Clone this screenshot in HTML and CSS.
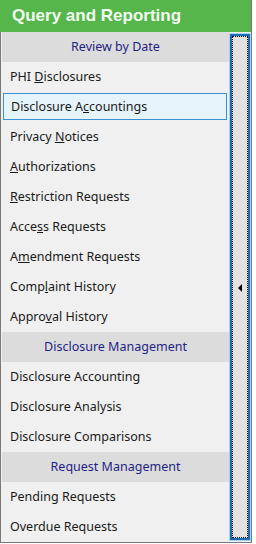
FILE: index.html
```html
<!DOCTYPE html>
<html lang="en">
<head>
    <meta charset="UTF-8">
    <title>Query and Reporting</title>
    <link rel="stylesheet" href="styles.css">
</head>
<body>
    <div class="panel">
        <div class="title">Query and Reporting</div>
        <div class="content">
            <div class="list">
                <div class="group">Review by Date</div>
                <div class="item">PHI <u>D</u>isclosures</div>
                <div class="item selected">Disclosure A<u>c</u>countings</div>
                <div class="item">Privacy <u>N</u>otices</div>
                <div class="item"><u>A</u>uthorizations</div>
                <div class="item"><u>R</u>estriction Requests</div>
                <div class="item">Acce<u>s</u>s Requests</div>
                <div class="item">A<u>m</u>endment Requests</div>
                <div class="item">Comp<u>l</u>aint History</div>
                <div class="item">Appro<u>v</u>al History</div>
                <div class="group">Disclosure Management</div>
                <div class="item">Disclosure Accounting</div>
                <div class="item">Disclosure Analysis</div>
                <div class="item">Disclosure Comparisons</div>
                <div class="group">Request Management</div>
                <div class="item">Pending Requests</div>
                <div class="item">Overdue Requests</div>
            </div>
            <div class="splitter">
                <div class="splitter-inner">
                    <span class="arrow"></span>
                </div>
            </div>
        </div>
    </div>
</body>
</html>
```

FILE: styles.css
```css
body {
    margin: 0;
    background-color: #fff;
    font-family: "Noto Sans", "Open Sans", sans-serif;
}
.panel {
    width: 251px;
    border-right: 1px solid #7a7a7a;
}
.title {
    height: 32px;
    background-color: #56b54b;
    color: #f2fff0;
    font-family: "Liberation Sans", Arial, sans-serif;
    font-weight: bold;
    font-size: 17px;
    line-height: 31px;
    padding-left: 12px;
}
.content {
    display: flex;
    height: 510px;
    border-left: 1px solid #7a7a7a;
    border-bottom: 1px solid #7a7a7a;
    background-color: #f0f0f0;
}
.list {
    width: 227px;
    padding-left: 1px;
}
.group {
    height: 30px;
    line-height: 29px;
    background-color: #dcdcdc;
    color: #1f1f86;
    font-size: 12.5px;
    text-align: center;
}
.item {
    height: 30px;
    line-height: 29px;
    font-size: 12.5px;
    color: #1a1a1a;
    padding-left: 8px;
    box-sizing: border-box;
}
.item.selected {
    margin: 1px 2px 2px 1px;
    padding-left: 7px;
    line-height: 25px;
    height: 27px;
    background-color: #e5f3fb;
    border: 1px solid #3c90cf;
}
.splitter {
    width: 22px;
    margin-top: 1px;
    margin-bottom: 1px;
    box-sizing: border-box;
    border: 1px solid #a7d3f3;
}
.splitter-inner {
    height: 100%;
    box-sizing: border-box;
    border: 2px solid #1b6cb2;
    outline: 1px dotted #000;
    outline-offset: -3px;
    background-color: #e2e2e2;
    display: flex;
    align-items: center;
    justify-content: center;
}
.arrow {
    width: 0;
    height: 0;
    border-top: 4px solid transparent;
    border-bottom: 4px solid transparent;
    border-right: 4px solid #000;
    margin-top: 2px;
}
```
